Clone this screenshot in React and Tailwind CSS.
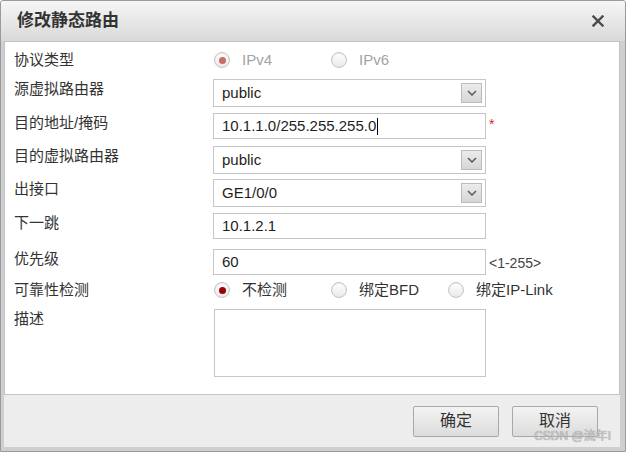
import React from "react";

const FONT = "font-['Liberation_Sans','Noto_Sans_CJK_SC',sans-serif]";

function Radio({ checked, disabled }) {
  return (
    <span className="flex h-[16px] w-[16px] shrink-0 items-center justify-center rounded-full border border-[#c4c4c4] bg-gradient-to-b from-white to-[#e9e9e9] shadow-[inset_0_1px_1px_rgba(0,0,0,0.08)]">
      {checked && (
        <span
          className={
            disabled
              ? "h-[7px] w-[7px] rounded-full bg-[#cc6a6a]"
              : "h-[7px] w-[7px] rounded-full bg-[#9c0000]"
          }
        />
      )}
    </span>
  );
}

function RadioItem({ label, checked, disabled }) {
  return (
    <div className="flex w-[117px] items-center gap-[12px]">
      <Radio checked={checked} disabled={disabled} />
      <span
        className={
          disabled
            ? "text-[15px] leading-[20px] text-[#a3a3a3]"
            : "text-[15px] leading-[20px] text-[#333]"
        }
      >
        {label}
      </span>
    </div>
  );
}

function Select({ value }) {
  return (
    <div className="flex h-[28px] w-[273px] items-center justify-between border border-[#c6c6c6] bg-white pl-[8px] pr-[3px]">
      <span className="text-[15px] text-[#1e1e1e]">{value}</span>
      <span className="flex h-[20px] w-[21px] items-center justify-center border border-[#bcbcbc] bg-gradient-to-b from-[#ececec] to-[#d6d6d6]">
        <svg width="10" height="6" viewBox="0 0 10 6">
          <polyline points="1,1 5,5 9,1" fill="none" stroke="#5a5a5a" strokeWidth="1.5" />
        </svg>
      </span>
    </div>
  );
}

function Input({ value, cursor }) {
  return (
    <div className="flex h-[26px] w-[273px] items-center border border-[#c6c6c6] bg-white pl-[8px]">
      <span className="text-[15px] text-[#1e1e1e]">{value}</span>
      {cursor && <span className="ml-[1px] h-[17px] w-[1px] bg-black" />}
    </div>
  );
}

function Row({ label, mt, children }) {
  return (
    <div className={`flex items-start ${mt}`}>
      <div className="w-[199px] shrink-0 text-[15px] leading-[20px] text-[#333]">{label}</div>
      <div className="flex items-center">{children}</div>
    </div>
  );
}

export default function App() {
  return (
    <div className={`${FONT} relative flex h-[452px] w-[626px] flex-col overflow-hidden rounded-t-[3px] border border-[#9a9a9a] bg-[#cfcfcf]`}>
      {/* Title bar */}
      <div className="flex h-[40px] shrink-0 items-center justify-between bg-gradient-to-b from-[#f6f6f6] to-[#d9d9d9] pl-[16px] pr-[21px]">
        <span className="text-[17px] font-bold text-[#333]">修改静态路由</span>
        <svg width="12" height="12" viewBox="0 0 12 12">
          <path d="M1.5 1.5 L10.5 10.5 M10.5 1.5 L1.5 10.5" stroke="#4a4a4a" strokeWidth="2.4" strokeLinecap="square" />
        </svg>
      </div>

      {/* Body */}
      <div className="flex flex-1 flex-col pl-[3px] pr-[5px] pb-[4px]">
        <div className="flex flex-1 flex-col bg-[#ededed]">
          {/* Form panel */}
          <div className="flex h-[354px] shrink-0 flex-col border border-[#c3c3c3] bg-white pl-[9px] pt-[8px]">
            <Row label="协议类型" mt="mt-0">
              <div className="ml-[1px] flex h-[20px] items-center">
                <RadioItem label="IPv4" checked disabled />
                <RadioItem label="IPv6" disabled />
              </div>
            </Row>
            <Row label="源虚拟路由器" mt="mt-[9px]">
              <Select value="public" />
            </Row>
            <Row label="目的地址/掩码" mt="mt-[6px]">
              <Input value="10.1.1.0/255.255.255.0" cursor />
              <span className="ml-[3px] -mt-[4px] text-[14px] text-[#e02020]">*</span>
            </Row>
            <Row label="目的虚拟路由器" mt="mt-[7px]">
              <Select value="public" />
            </Row>
            <Row label="出接口" mt="mt-[5px]">
              <Select value="GE1/0/0" />
            </Row>
            <Row label="下一跳" mt="mt-[6px]">
              <Input value="10.1.2.1" />
            </Row>
            <Row label="优先级" mt="mt-[10px]">
              <Input value="60" />
              <span className="ml-[3px] mt-[2px] text-[14px] text-[#444]">&lt;1-255&gt;</span>
            </Row>
            <Row label="可靠性检测" mt="mt-[5px]">
              <div className="ml-[1px] flex h-[20px] items-center">
                <RadioItem label="不检测" checked />
                <RadioItem label="绑定BFD" />
                <RadioItem label="绑定IP-Link" />
              </div>
            </Row>
            <Row label="描述" mt="mt-[9px]">
              <div className="ml-[1px] h-[68px] w-[272px] border border-[#c6c6c6] bg-white" />
            </Row>
          </div>

          {/* Footer */}
          <div className="flex flex-1 items-center justify-end gap-[13px] pr-[22px]">
            <button className="flex h-[31px] w-[86px] items-center justify-center rounded-[2px] border border-[#a9a9a9] bg-gradient-to-b from-[#f3f3f3] to-[#dcdcdc] text-[16px] text-[#333]">
              确定
            </button>
            <button className="flex h-[31px] w-[86px] items-center justify-center rounded-[2px] border border-[#a9a9a9] bg-gradient-to-b from-[#f3f3f3] to-[#dcdcdc] text-[16px] text-[#333]">
              取消
            </button>
          </div>
        </div>
      </div>

      {/* Watermark */}
      <span className="pointer-events-none absolute bottom-[6px] right-[14px] text-[12px] text-[#c4c4c4] [text-shadow:0_0_1px_#888]">
        CSDN @流年I
      </span>
    </div>
  );
}
